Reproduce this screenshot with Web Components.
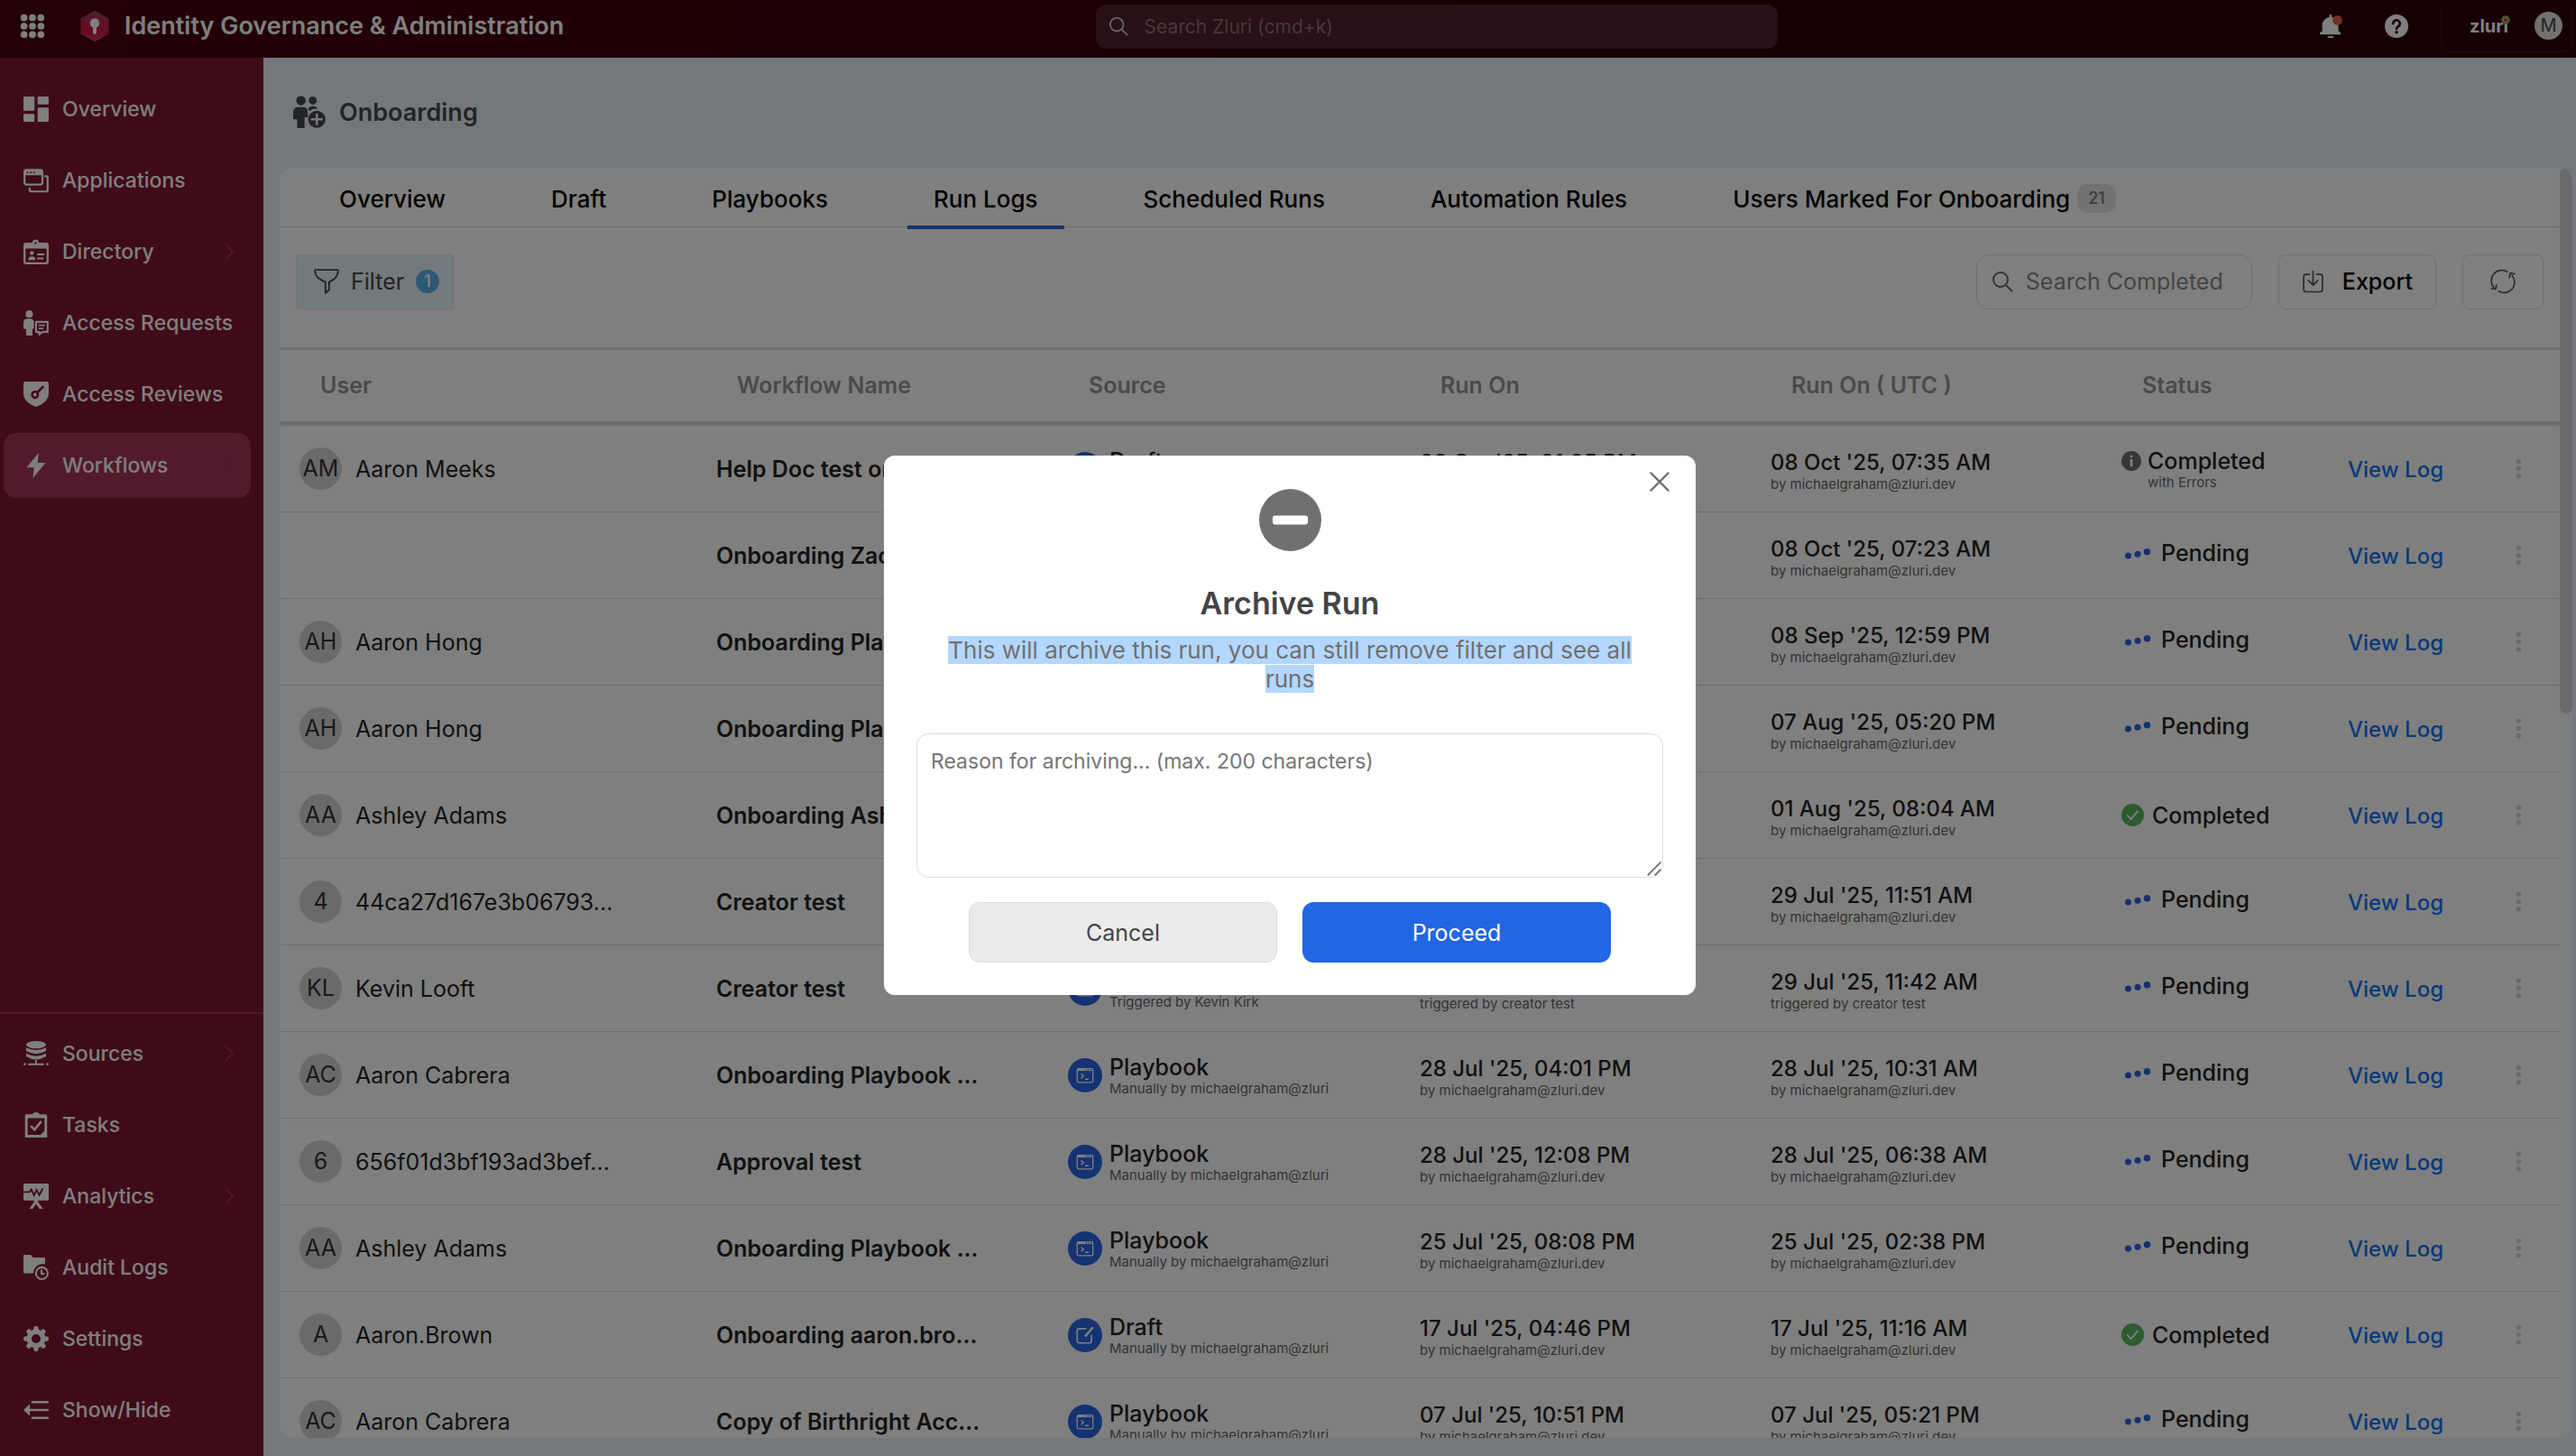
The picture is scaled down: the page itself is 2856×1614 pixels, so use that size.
<!DOCTYPE html>
<html lang="en">
<head>
<meta charset="utf-8">
<title>Identity Governance &amp; Administration</title>
<style>
    html, body { height: 100%; }
    body {
        margin: 0;
        overflow: hidden;
        font-family: Inter, "Liberation Sans", sans-serif;
        font-size: 25px;
        color: #222;
    }
</style>
</head>
<body>
<iga-app></iga-app>

<script>
const ICONS = {
    apps: `<g fill="currentColor"><circle cx="4" cy="4" r="3.3"/><circle cx="12" cy="4" r="3.3"/><circle cx="20" cy="4" r="3.3"/><circle cx="4" cy="12" r="3.3"/><circle cx="12" cy="12" r="3.3"/><circle cx="20" cy="12" r="3.3"/><circle cx="4" cy="20" r="3.3"/><circle cx="12" cy="20" r="3.3"/><circle cx="20" cy="20" r="3.3"/></g>`,
    logo: `<defs><linearGradient id="g" x1="0" y1="0" x2="0" y2="1"><stop offset="0" stop-color="#a03c5c"/><stop offset=".75" stop-color="#d01440"/><stop offset="1" stop-color="#c04468"/></linearGradient></defs><path fill="url(#g)" stroke="url(#g)" stroke-width="2" stroke-linejoin="round" d="M12 1 22 6.500v11L12 23 2 17.500v-11z"/><path fill="#fff" d="M12 6a3.700 3.700 0 0 0-1.400 7.100V17a1.400 1.400 0 0 0 2.800 0v-3.900A3.700 3.700 0 0 0 12 6z"/>`,
    search: `<g fill="none" stroke="currentColor" stroke-width="2" stroke-linecap="round"><circle cx="10" cy="10" r="8"/><path d="m16 16 6.500 6.500"/></g>`,
    bell: `<path fill="currentColor" d="M11 0c.7 0 1.200.5 1.200 1.200v1.600C16.500 3.600 19 7 19 11v6l2.500 2v1.500H0V19l2.500-2v-6C2.500 7 5.500 3.600 9.800 2.800V1.200C9.800.5 10.300 0 11 0zM8 22.300h6v1.700H8z"/><circle cx="18" cy="6" r="5" fill="#e8604c"/>`,
    help: `<circle cx="12" cy="12" r="12" fill="currentColor"/><path fill="none" stroke="#2e0008" stroke-width="2.400" stroke-linecap="round" d="M8.500 9.300a3.500 3.500 0 1 1 5.300 3c-1.200.8-1.800 1.300-1.800 2.500"/><circle cx="12" cy="18.300" r="1.600" fill="#2e0008"/>`,
    overview: `<g fill="currentColor"><rect width="10.500" height="13.500" rx="1"/><rect y="16.500" width="10.500" height="7.500" rx="1"/><rect x="13.500" width="10.500" height="7.500" rx="1"/><rect x="13.500" y="10.500" width="10.500" height="13.500" rx="1"/></g>`,
    applications: `<g fill="none" stroke="currentColor" stroke-width="1.900" stroke-linejoin="round" stroke-linecap="round"><rect x="1" y="2" width="17" height="14" rx="2"/><path d="M20.500 8H22q1 0 1 1v12q0 1.500-1.500 1.500h-14Q6 22.500 6 21v-1.500"/></g><path fill="currentColor" d="M1 3q0-1 1-1h15q1 0 1 1v4H1z"/><g fill="#7e1632"><circle cx="4" cy="4.500" r=".9"/><circle cx="7" cy="4.500" r=".9"/><circle cx="10" cy="4.500" r=".9"/></g>`,
    directory: `<rect x="1" y="4.500" width="22" height="18.500" rx="1.500" fill="none" stroke="currentColor" stroke-width="2"/><path fill="currentColor" d="M1 4h7.500V3.500a3 3 0 0 1 6 0V4H23v5H1z"/><circle cx="11.500" cy="3.800" r="1" fill="#7e1632"/><circle cx="8" cy="13.300" r="1.900" fill="currentColor"/><path fill="currentColor" d="M4.500 20q0-3.500 3.500-3.500t3.500 3.500z"/><path stroke="currentColor" stroke-width="1.700" d="M13 14.500h7M13 18.500h6"/>`,
    requests: `<circle cx="5.500" cy="3.600" r="3.500" fill="currentColor"/><path fill="currentColor" d="M0 12q0-4 4-4h2.500q3 0 3.500 3v6.500H8.500V24h-6v-6.500H0z"/><path fill="none" stroke="currentColor" stroke-width="1.800" stroke-linejoin="round" d="M12 11h11v9.500h-5l-3 2.500v-2.500h-3z"/><path stroke="currentColor" stroke-width="1.500" d="M14.500 14.200h6M14.500 17.200h4.500"/>`,
    reviews: `<path fill="currentColor" d="M2 0h20q2 0 2 2v9c0 6.500-5 10.500-12 13C5 21.500 0 17.500 0 11V2q0-2 2-2z"/><g fill="none" stroke="#7e1632" stroke-width="2.200" stroke-linecap="round"><circle cx="11" cy="12.500" r="2.800"/><path d="m13 10.500 5.500-5.500"/></g>`,
    workflows: `<path fill="currentColor" d="M14.500 0 3 14h7L9 24l12-14.500h-7.500z"/>`,
    sources: `<g fill="currentColor"><ellipse cx="12" cy="3.500" rx="9.500" ry="3.500"/><path d="M2.500 6.200Q12 11 21.500 6.200v3.300Q12 15 2.500 9.500z"/><path d="M2.500 11.800q9.500 5 19 0v2.700q-9.500 6-19 0z"/><path d="M11.200 18h1.600v3.500h-1.600z"/><rect x="4.500" y="21.200" width="15" height="1.800"/><circle cx="1.200" cy="22" r="1.200"/><circle cx="22.800" cy="22" r="1.200"/></g>`,
    tasks: `<path fill="currentColor" fill-rule="evenodd" d="M3 2h5.500q1-2 3.500-2t3.500 2H21q1.500 0 1.500 1.500V24h-21V3.500Q1.500 2 3 2zm1 3.500v16h12.500l3.500-4v-12z"/><path fill="none" stroke="currentColor" stroke-width="2.300" d="m7 13 3.500 3.500L17 8.500"/>`,
    analytics: `<path fill="currentColor" d="M1 0h22q1 0 1 1v14q0 1-1 1h-9v1.500l4.500 6.500h-3.200L12 19.500 8.700 24H5.500l4.500-6.500V16H1q-1 0-1-1V1q0-1 1-1z"/><path fill="none" stroke="#7e1632" stroke-width="1.600" d="M0 8h6l1.500-2.500L10 11l2.500-5L15 11l3.500-6.500"/>`,
    audit: `<path fill="currentColor" d="M0 1q0-1 1-1h6l2 2.500h10.500q1 0 1 1V9a8.500 8.500 0 0 0-11 8.500H1q-1 0-1-1z"/><circle cx="17.500" cy="17.500" r="5.600" fill="none" stroke="currentColor" stroke-width="1.800"/><path fill="none" stroke="currentColor" stroke-width="1.800" d="M17.200 14v4h3"/>`,
    settings: `<circle cx="12" cy="12" r="6.600" fill="none" stroke="currentColor" stroke-width="4.600"/><g stroke="currentColor" stroke-width="4.600" stroke-linecap="round"><path d="M12 2.300V4M12 20v1.700M2.300 12H4M20 12h1.700M5.200 5.200l1 1M17.800 17.800l1 1M5.200 18.800l1-1M17.800 6.200l1-1"/></g>`,
    collapse: `<path fill="none" stroke="currentColor" stroke-width="2.200" stroke-linecap="round" d="M8.500 4.500H23M5 12h18M8.500 19.500H23"/><path fill="currentColor" d="m0 12 6-5.500v11z"/>`,
    chevron: `<path fill="none" stroke="currentColor" stroke-width="2.500" d="m7 2 10 10L7 22"/>`,
    people: `<circle cx="5.800" cy="3.600" r="3.500" fill="currentColor"/><circle cx="14.500" cy="3.600" r="3" fill="currentColor"/><path fill="currentColor" d="M0 13q0-4.500 3.500-4.500h4q3 0 3.300 3.500v4H8.500V24H3v-6.500H0zM11 9.500q1.500-1.700 4-1.600 2.500 0 3 1.800-3.500-.3-5.700 1.600z"/><circle cx="17.500" cy="17.500" r="6.400" fill="currentColor"/><path stroke="#e8f0fa" stroke-width="1.600" d="M17.500 13.200v8.600M13.200 17.500h8.600"/>`,
    filter: `<path fill="none" stroke="currentColor" stroke-width="1.600" stroke-linejoin="round" d="M1 2q0-1 1-1h20q1 0 1 1 0 7-8.500 10.500V20L11 23V12.500Q1 9 1 2z"/>`,
    download: `<g fill="none" stroke="currentColor" stroke-width="1.600" stroke-linecap="round" stroke-linejoin="round"><path d="M8 4.500H4.500Q2 4.500 2 7v13.500Q2 23 4.500 23h15q2.500 0 2.500-2.500V7q0-2.500-2.500-2.500H16M12 1v14.500M7 11l5 5 5-5"/></g>`,
    refresh: `<g fill="none" stroke="currentColor" stroke-width="1.400" stroke-linejoin="round"><path d="M16.500 3A10 10 0 0 0 3.500 18M7.500 21a10 10 0 0 0 13-15"/><path d="M.5 18.500l4.500.8 1-4.500M23.500 5l-4.500-1-1 5"/></g>`,
    close: `<path stroke="currentColor" stroke-width="2.400" stroke-linecap="round" d="m1.500 1.500 21 21m0-21-21 21"/>`,
    minus: `<circle cx="12" cy="12" r="12" fill="currentColor"/><rect x="5.200" y="10.300" width="13.600" height="3.400" rx="1" fill="#fff"/>`,
    grip: `<path stroke="currentColor" stroke-width="2.400" d="M1 23 23 1M13 23 23 13"/>`,
    kebab: `<g fill="currentColor"><circle cx="12" cy="3.500" r="2.800"/><circle cx="12" cy="12" r="2.800"/><circle cx="12" cy="20.500" r="2.800"/></g>`,
    pending: `<g fill="#2a60dc"><circle cx="3" cy="14.500" r="3"/><circle cx="12" cy="13" r="3"/><circle cx="21" cy="11" r="3.200"/></g>`,
    done: `<circle cx="12" cy="12" r="12" fill="#56b75c"/><path fill="none" stroke="#fff" stroke-width="1.700" stroke-linecap="round" stroke-linejoin="round" d="m6.500 12.500 3.800 4 7-8.500"/>`,
    info: `<circle cx="12" cy="12" r="12" fill="#6e6e6e"/><circle cx="12" cy="6.500" r="1.700" fill="#fff"/><path fill="#fff" d="M10.500 9.800h3v9h-3z"/>`,
    playbook: `<circle cx="12" cy="12" r="12" fill="#2a66e4"/><rect x="6.500" y="7.500" width="11" height="9.500" rx="1" fill="none" stroke="#fff" stroke-width=".8"/><path fill="#fff" d="M6.500 7h11v1.900h-11z"/><path fill="none" stroke="#fff" stroke-width=".9" d="m9.200 11 1.700 1.500-1.700 1.500M12 14.700h2.600"/><path stroke="#2a66e4" stroke-width=".8" d="M12.500 8h1M14.200 8h1M15.900 8h1"/>`,
    draft: `<circle cx="12" cy="12" r="12" fill="#2a66e4"/><path fill="none" stroke="#fff" stroke-linecap="round" d="M12.500 7.500H8q-1.500 0-1.500 1.500v7q0 1.500 1.500 1.500h7q1.500 0 1.500-1.500v-4"/><path stroke="#fff" stroke-width="1.600" d="m12 13 5.500-6.500"/>`,
    ring: `<circle cx="12" cy="12" r="9.500" fill="#2e0008" stroke="#4cc38a" stroke-width="4"/><circle cx="12" cy="12" r="6" fill="#d3203c" stroke="#ffb020" stroke-width="3"/>`
};

class IgaIcon extends HTMLElement {
    constructor() {
        super();
        this.attachShadow({ mode: "open" });
    }

    connectedCallback() {
        this.shadowRoot.innerHTML = /*html*/`
            <style>
            :host{display: block; flex: none; width: 28px; height: 28px;}
            svg{display: block; width: 100%; height: 100%; overflow: visible;}
            </style>
            <svg viewBox="0 0 24 24" aria-hidden="true">${ICONS[this.getAttribute("name")] || ""}</svg>
        `;
    }
}
customElements.define("iga-icon", IgaIcon);


const topbarTemplate = document.createElement("template");
topbarTemplate.innerHTML = /*html*/`
    <style>
    :host{
        display: grid;
        grid-template-columns: 23fr 756px 17fr;
        align-items: center;
        box-sizing: border-box;
        height: 64px;
        padding: 0 4px 9px 22px;
        background: linear-gradient(90deg, #48000f, #2e0008 60%);
        color: #fff;
    }
    .brand, .search, .tools, .account{display: flex; align-items: center;}
    button{display: flex; border: 0; padding: 0; background: none; color: inherit; font: inherit; cursor: pointer;}
    .brand{gap: 16px;}
    .brand button{margin-right: 22px;}
    .logo{width: 34px; height: 34px;}
    h1{margin: 0; font-size: 27px; font-weight: 600; line-height: 32px; white-space: nowrap;}
    .search{box-sizing: border-box; height: 49px; gap: 18px; padding: 0 14px; border-radius: 12px; background: #4e222c;}
    .search iga-icon{width: 22px; height: 22px; color: #ccc;}
    input{flex: 1; min-width: 0; border: 0; padding: 0; outline: 0; background: none; color: #fff; font: inherit; font-size: 21px;}
    input::placeholder{color: #907078; opacity: 1;}
    .tools{justify-content: flex-end; gap: 46px;}
    .tools button iga-icon{width: 26px; height: 26px;}
    .account{box-sizing: border-box; height: 58px; width: 146px; margin-left: -10px; justify-content: flex-end; gap: 29px; padding-right: 10px; border: 1px solid #44141e; border-top: 0; border-radius: 12px;}
    .zluri{position: relative; font-size: 20px; line-height: 24px; font-weight: 700;}
    .zluri iga-icon{position: absolute; top: 0; right: -2px; width: 10px; height: 10px;}
    .me{width: 31px; height: 31px; border-radius: 50%; background: #e4e0e0; color: #444; font-size: 20px; line-height: 31px; text-align: center;}
    </style>

    <div class="brand">
        <button aria-label="Apps"><iga-icon name="apps"></iga-icon></button>
        <iga-icon class="logo" name="logo"></iga-icon>
        <h1>Identity Governance &amp; Administration</h1>
    </div>
    <label class="search">
        <iga-icon name="search"></iga-icon>
        <input type="text" aria-label="Search Zluri" placeholder="Search Zluri (cmd+k)">
    </label>
    <div class="tools">
        <button aria-label="Notifications"><iga-icon name="bell"></iga-icon></button>
        <button aria-label="Help"><iga-icon name="help"></iga-icon></button>
        <div class="account">
            <span class="zluri">zluri<iga-icon name="ring"></iga-icon></span>
            <span class="me">M</span>
        </div>
    </div>
`;

class IgaTopbar extends HTMLElement {
    constructor() {
        super();
        this.attachShadow({ mode: "open" });
        this.shadowRoot.appendChild(topbarTemplate.content.cloneNode(true));
    }
}
customElements.define("iga-topbar", IgaTopbar);


class IgaNavItem extends HTMLElement {
    constructor() {
        super();
        this.attachShadow({ mode: "open" });
    }

    connectedCallback() {
        this.shadowRoot.innerHTML = /*html*/`
            <style>
            :host{display: block;}
            a{
                display: flex;
                align-items: center;
                gap: 15px;
                box-sizing: border-box;
                height: 72px;
                padding: 0 14px 0 22px;
                border-radius: 14px;
                color: #fff;
                text-decoration: none;
                font-size: 23px;
                font-weight: 500;
                white-space: nowrap;
            }
            :host([active]) a{background: #a43556;}
            .label{flex: 1;}
            .more{display: none; width: 20px; height: 20px; color: #a82850;}
            :host([more]) .more{display: block;}
            </style>
            <a href="#">
                <iga-icon name="${this.getAttribute("icon")}"></iga-icon>
                <span class="label"><slot></slot></span>
                <iga-icon class="more" name="chevron"></iga-icon>
            </a>
        `;
    }
}
customElements.define("iga-nav-item", IgaNavItem);


const sidebarTemplate = document.createElement("template");
sidebarTemplate.innerHTML = /*html*/`
    <style>
    :host{display: flex; flex-direction: column; justify-content: space-between; width: 292px; background: #7e1632;}
    nav{display: flex; flex-direction: column; gap: 7px; padding: 21px 14px 0 4px;}
    .bottom{padding: 8px 14px 15px 4px; border-top: 2px solid #b02a50;}
    </style>
    <nav aria-label="Main">
        <iga-nav-item icon="overview">Overview</iga-nav-item>
        <iga-nav-item icon="applications">Applications</iga-nav-item>
        <iga-nav-item icon="directory" more>Directory</iga-nav-item>
        <iga-nav-item icon="requests">Access Requests</iga-nav-item>
        <iga-nav-item icon="reviews">Access Reviews</iga-nav-item>
        <iga-nav-item icon="workflows" active more>Workflows</iga-nav-item>
    </nav>
    <nav class="bottom" aria-label="Tools">
        <iga-nav-item icon="sources" more>Sources</iga-nav-item>
        <iga-nav-item icon="tasks">Tasks</iga-nav-item>
        <iga-nav-item icon="analytics" more>Analytics</iga-nav-item>
        <iga-nav-item icon="audit">Audit Logs</iga-nav-item>
        <iga-nav-item icon="settings">Settings</iga-nav-item>
        <iga-nav-item icon="collapse">Show/Hide</iga-nav-item>
    </nav>
`;

class IgaSidebar extends HTMLElement {
    constructor() {
        super();
        this.attachShadow({ mode: "open" });
        this.shadowRoot.appendChild(sidebarTemplate.content.cloneNode(true));
    }
}
customElements.define("iga-sidebar", IgaSidebar);


const tabsTemplate = document.createElement("template");
tabsTemplate.innerHTML = /*html*/`
    <style>
    :host{display: flex; gap: 59px; height: 65px; padding-left: 37px; border-bottom: 1px solid #dcdcdc;}
    a{
        display: flex;
        align-items: center;
        gap: 8px;
        box-sizing: border-box;
        height: 68px;
        padding: 4px 29px 0;
        border-bottom: 4px solid transparent;
        color: #000;
        text-decoration: none;
        font-size: 26px;
        font-weight: 500;
        white-space: nowrap;
    }
    a[aria-current]{border-color: #2266e2;}
    .count{padding: 0 12px; border-radius: 12px; background: #e4e4e4; color: #777; font-size: 18px; line-height: 32px;}
    </style>
    <a href="#">Overview</a>
    <a href="#">Draft</a>
    <a href="#">Playbooks</a>
    <a href="#" aria-current="page">Run Logs</a>
    <a href="#">Scheduled Runs</a>
    <a href="#">Automation Rules</a>
    <a href="#">Users Marked For Onboarding <span class="count">21</span></a>
`;

class IgaTabs extends HTMLElement {
    constructor() {
        super();
        this.attachShadow({ mode: "open" });
        this.shadowRoot.appendChild(tabsTemplate.content.cloneNode(true));
    }
}
customElements.define("iga-tabs", IgaTabs);


const toolbarTemplate = document.createElement("template");
toolbarTemplate.innerHTML = /*html*/`
    <style>
    :host{display: flex; align-items: center; gap: 29px; box-sizing: border-box; height: 133px; padding: 0 18px 13px;}
    button, .search{
        display: flex;
        align-items: center;
        box-sizing: border-box;
        height: 61px;
        margin: 0;
        border: 1px solid #dcdcdc;
        border-radius: 8px;
        background: none;
        color: #000;
        font: inherit;
        white-space: nowrap;
    }
    .filter{gap: 13px; padding: 0 15px 0 19px; margin-right: auto; border-color: #dcebf2; border-radius: 2px; background: #e6f4fa; color: #444;}
    .filter b{width: 26px; height: 26px; border-radius: 50%; background: #5ab0e8; color: #fff; font-size: 18px; line-height: 26px; font-weight: 600; text-align: center;}
    .search{width: 306px; gap: 14px; padding: 0 16px; border-radius: 14px; color: #666;}
    .search iga-icon{width: 24px; height: 24px;}
    input{flex: 1; min-width: 0; border: 0; padding: 0; outline: 0; background: none; font: inherit;}
    input::placeholder{color: #888; opacity: 1;}
    .export{gap: 20px; padding: 0 25px; font-weight: 500;}
    .export iga-icon, .refresh iga-icon{color: #555;}
    .export iga-icon{width: 25px;}
    .refresh{width: 90px; justify-content: center; padding: 0;}
    </style>
    <button class="filter"><iga-icon name="filter"></iga-icon>Filter <b>1</b></button>
    <label class="search"><iga-icon name="search"></iga-icon><input type="text" aria-label="Search Completed" placeholder="Search Completed"></label>
    <button class="export"><iga-icon name="download"></iga-icon>Export</button>
    <button class="refresh" aria-label="Refresh"><iga-icon name="refresh"></iga-icon></button>
`;

class IgaToolbar extends HTMLElement {
    constructor() {
        super();
        this.attachShadow({ mode: "open" });
        this.shadowRoot.appendChild(toolbarTemplate.content.cloneNode(true));
    }
}
customElements.define("iga-toolbar", IgaToolbar);


const BY = "by michaelgraham@zluri.dev";
const MANUAL = "Manually by michaelgraham@zluri.dev";

// initials, user, workflow, source, source note, run on, run on (utc), run note, status
const RUNS = [
    ["AM", "Aaron Meeks", "Help Doc test onb...", "Draft", MANUAL, "08 Oct '25, 01:05 PM", "08 Oct '25, 07:35 AM", BY, "errors"],
    ["", "", "Onboarding Zack ...", "Playbook", MANUAL, "08 Oct '25, 12:53 PM", "08 Oct '25, 07:23 AM", BY, "pending"],
    ["AH", "Aaron Hong", "Onboarding Playbook ...", "Playbook", MANUAL, "08 Sep '25, 06:29 PM", "08 Sep '25, 12:59 PM", BY, "pending"],
    ["AH", "Aaron Hong", "Onboarding Playbook ...", "Playbook", MANUAL, "07 Aug '25, 10:50 PM", "07 Aug '25, 05:20 PM", BY, "pending"],
    ["AA", "Ashley Adams", "Onboarding Ashley ...", "Draft", MANUAL, "01 Aug '25, 01:34 PM", "01 Aug '25, 08:04 AM", BY, "completed"],
    ["4", "44ca27d167e3b06793...", "Creator test", "Playbook", MANUAL, "29 Jul '25, 05:21 PM", "29 Jul '25, 11:51 AM", BY, "pending"],
    ["KL", "Kevin Looft", "Creator test", "Playbook", "Triggered by Kevin Kirk", "29 Jul '25, 05:12 PM", "29 Jul '25, 11:42 AM", "triggered by creator test", "pending"],
    ["AC", "Aaron Cabrera", "Onboarding Playbook ...", "Playbook", MANUAL, "28 Jul '25, 04:01 PM", "28 Jul '25, 10:31 AM", BY, "pending"],
    ["6", "656f01d3bf193ad3bef...", "Approval test", "Playbook", MANUAL, "28 Jul '25, 12:08 PM", "28 Jul '25, 06:38 AM", BY, "pending"],
    ["AA", "Ashley Adams", "Onboarding Playbook ...", "Playbook", MANUAL, "25 Jul '25, 08:08 PM", "25 Jul '25, 02:38 PM", BY, "pending"],
    ["A", "Aaron.Brown", "Onboarding aaron.bro...", "Draft", MANUAL, "17 Jul '25, 04:46 PM", "17 Jul '25, 11:16 AM", BY, "completed"],
    ["AC", "Aaron Cabrera", "Copy of Birthright Acc...", "Playbook", MANUAL, "07 Jul '25, 10:51 PM", "07 Jul '25, 05:21 PM", BY, "pending"]
];

const STATUS = {
    errors: `<div class="status errors"><iga-icon name="info"></iga-icon><div>Completed<small>with Errors</small></div></div>`,
    completed: `<div class="status completed"><iga-icon name="done"></iga-icon>Completed</div>`,
    pending: `<div class="status pending"><iga-icon name="pending"></iga-icon>Pending</div>`
};

class IgaRunTable extends HTMLElement {
    constructor() {
        super();
        this.attachShadow({ mode: "open" });
        this.shadowRoot.innerHTML = /*html*/`
            <style>
            :host{display: block;}
            table{width: 100%; table-layout: fixed; border-collapse: separate; border-spacing: 0;}
            th, td{box-sizing: border-box; padding: 0 0 0 22px; text-align: left; white-space: nowrap;}
            th{height: 87px; padding: 0 0 2px 45px; border-top: 3px solid #dedede; border-bottom: 5px solid #d8d8d8; color: #949494; font-weight: 600;}
            td{height: 96px; border-bottom: 1px solid #dadada;}
            small{display: block; color: #666; font-size: 15px; line-height: 18px; font-weight: 400;}
            .user, .source, .status{display: flex; align-items: center;}
            .user{gap: 15px;}
            .avatar{width: 47px; height: 47px; border-radius: 50%; background: #d4d4d4; color: #333; line-height: 47px; text-align: center;}
            .workflow{font-weight: 600;}
            .source{gap: 8px; font-weight: 500; line-height: 30px;}
            .source iga-icon{width: 38px; height: 38px;}
            .source div{max-width: 243px; overflow: hidden;}
            .when{padding-top: 4px; font-size: 24px; font-weight: 500; line-height: 30px;}
            .status{font-weight: 500; line-height: 30px;}
            .pending{gap: 12px; padding: 0 0 6px 4px;}
            .completed{gap: 9px;}
            .completed iga-icon{width: 25px; height: 25px;}
            .errors{align-items: flex-start; gap: 7px;}
            .errors iga-icon{width: 22px; height: 22px; margin-top: 4px;}
            a{color: #1073f2; font-weight: 500; font-size: 24px; text-decoration: none;}
            button{display: block; border: 0; padding: 0; background: none; color: #d2d2d2;}
            button iga-icon{width: 23px; height: 23px;}
            </style>
            <table>
                <colgroup>
                    <col style="width: 462px"><col style="width: 390px"><col style="width: 390px"><col style="width: 389px">
                    <col style="width: 389px"><col style="width: 251px"><col style="width: 178px"><col style="width: 79px">
                </colgroup>
                <thead>
                    <tr><th>User</th><th>Workflow Name</th><th>Source</th><th>Run On</th><th>Run On ( UTC )</th><th>Status</th><th></th><th></th></tr>
                </thead>
                <tbody>${RUNS.map(run => this.row(run)).join("")}</tbody>
            </table>
        `;
    }

    row([initials, user, workflow, source, note, runOn, utc, by, status]) {
        const who = user ? `<div class="user"><span class="avatar">${initials}</span>${user}</div>` : "";
        return `<tr>
            <td>${who}</td>
            <td class="workflow">${workflow}</td>
            <td><div class="source"><iga-icon name="${source.toLowerCase()}"></iga-icon><div>${source}<small>${note}</small></div></div></td>
            <td class="when">${runOn}<small>${by}</small></td>
            <td class="when">${utc}<small>${by}</small></td>
            <td>${STATUS[status]}</td>
            <td><a href="#">View Log</a></td>
            <td><button aria-label="More actions"><iga-icon name="kebab"></iga-icon></button></td>
        </tr>`;
    }
}
customElements.define("iga-run-table", IgaRunTable);


const modalTemplate = document.createElement("template");
modalTemplate.innerHTML = /*html*/`
    <style>
    :host{
        position: fixed;
        inset: 0;
        display: flex;
        align-items: center;
        justify-content: center;
        padding: 0 0 6px 4px;
        background: rgba(0, 0, 0, .5);
        z-index: 10;
    }
    section{
        position: relative;
        display: flex;
        flex-direction: column;
        align-items: center;
        box-sizing: border-box;
        width: 900px;
        padding: 37px 36px 36px;
        border-radius: 12px;
        background: #fff;
        color: #444;
    }
    .close{position: absolute; top: 18px; right: 29px; border: 0; padding: 0; background: none; color: #707070;}
    .close iga-icon{width: 22px; height: 22px;}
    .symbol{width: 69px; height: 69px; color: #707070;}
    h2{margin: 38px 0 16px; font-size: 34px; line-height: 40px; font-weight: 600;}
    p{margin: 0 20px; color: #707070; font-size: 26px; line-height: 32px; text-align: center;}
    mark{background: #b3d7ff; color: inherit;}
    .reason{position: relative; display: flex; width: 100%; margin: 44px 0 27px;}
    .reason iga-icon{position: absolute; right: 2px; bottom: 2px; width: 16px; height: 16px; color: #666; pointer-events: none;}
    textarea{
        box-sizing: border-box;
        width: 100%;
        height: 160px;
        padding: 16px 15px;
        border: 1px solid #dcdcdc;
        border-radius: 14px;
        outline: 0;
        resize: vertical;
        font: inherit;
        font-size: 23px;
        line-height: 28px;
    }
    textarea::-webkit-resizer{background: none;}
    textarea::placeholder{color: #757575; opacity: 1;}
    .actions{display: grid; grid-template-columns: 1fr 1fr; gap: 28px; box-sizing: border-box; width: 100%; padding: 0 58px;}
    .actions button{height: 67px; border: 1px solid #dedede; border-radius: 12px; background: #ebebeb; color: #444; font: inherit;}
    .actions .primary{border-color: #2266e3; background: #2266e3; color: #fff;}
    </style>
    <section role="dialog" aria-labelledby="title">
        <button class="close" aria-label="Close"><iga-icon name="close"></iga-icon></button>
        <iga-icon class="symbol" name="minus"></iga-icon>
        <h2 id="title"><slot name="title"></slot></h2>
        <p><mark><slot></slot></mark></p>
        <div class="reason">
            <textarea maxlength="200" aria-label="Reason for archiving" placeholder="Reason for archiving... (max. 200 characters)"></textarea>
            <iga-icon name="grip"></iga-icon>
        </div>
        <div class="actions"><button>Cancel</button><button class="primary">Proceed</button></div>
    </section>
`;

class IgaModal extends HTMLElement {
    constructor() {
        super();
        this.attachShadow({ mode: "open" });
        this.shadowRoot.appendChild(modalTemplate.content.cloneNode(true));
        this.shadowRoot.querySelector(".close").onclick = () => this.remove();
    }
}
customElements.define("iga-modal", IgaModal);


const appTemplate = document.createElement("template");
appTemplate.innerHTML = /*html*/`
    <style>
    :host{display: flex; flex-direction: column; height: 100vh; background: #e8f0fa;}
    .body{flex: 1; display: flex; min-height: 0;}
    iga-sidebar{flex: none;}
    main{flex: 1; display: flex; flex-direction: column; min-width: 0; padding: 0 4px 20px 18px;}
    header{display: flex; align-items: center; gap: 15px; box-sizing: border-box; height: 122px; padding: 0 0 2px 15px; color: #484848;}
    header iga-icon{width: 36px; height: 36px;}
    h2{margin: 0; font-size: 27px; font-weight: 600;}
    .card{flex: 1; display: flex; min-height: 0; border-radius: 14px; background: #fff; overflow: hidden;}
    .content{flex: 1; min-width: 0;}
    .scrollbar{width: 14px; background: #fafafa;}
    .thumb{height: 43%; border-radius: 7px; background: #d4d4d4;}
    </style>
    <iga-topbar></iga-topbar>
    <div class="body">
        <iga-sidebar></iga-sidebar>
        <main>
            <header><iga-icon name="people"></iga-icon><h2>Onboarding</h2></header>
            <div class="card">
                <div class="content">
                    <iga-tabs></iga-tabs>
                    <iga-toolbar></iga-toolbar>
                    <iga-run-table></iga-run-table>
                </div>
                <div class="scrollbar"><div class="thumb"></div></div>
            </div>
        </main>
    </div>
    <iga-modal><span slot="title">Archive Run</span>This will archive this run, you can still remove filter and see all runs</iga-modal>
`;

class IgaApp extends HTMLElement {
    constructor() {
        super();
        this.attachShadow({ mode: "open" });
        this.shadowRoot.appendChild(appTemplate.content.cloneNode(true));
    }
}
customElements.define("iga-app", IgaApp);
</script>
</body>
</html>
